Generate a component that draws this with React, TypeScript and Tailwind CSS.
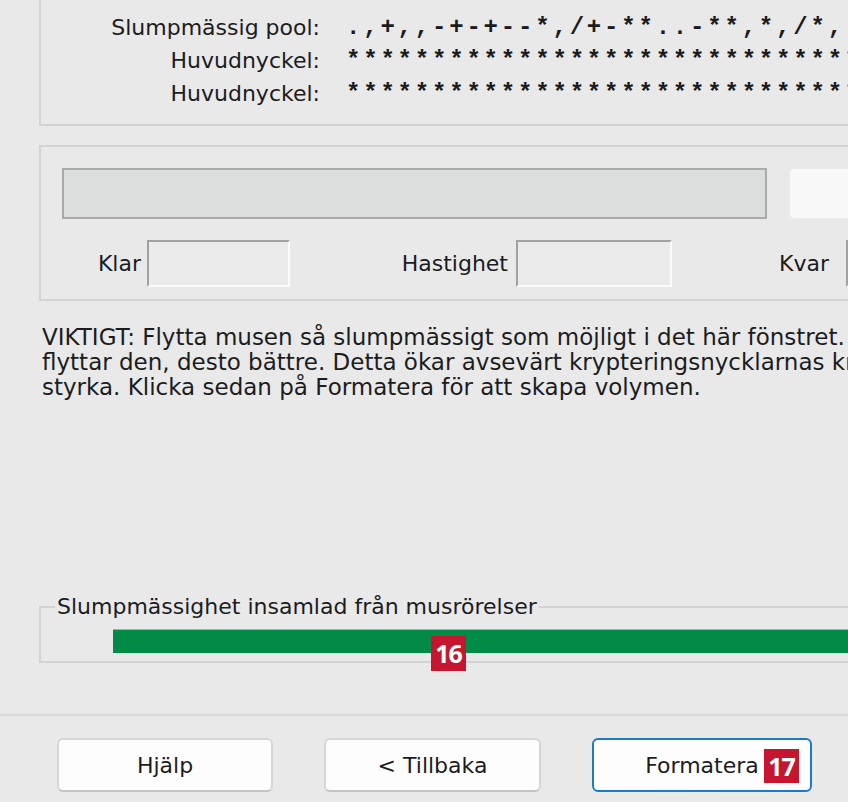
import React from "react";

const ui = { fontFamily: '"DejaVu Sans", Verdana, sans-serif' };
const mono = { fontFamily: '"Liberation Mono", "Courier New", monospace' };
const badge = { fontFamily: '"Open Sans", "Liberation Sans", Arial, sans-serif' };

function Sunken({ w }: { w: string }) {
  return (
    <div
      className={`${w} h-[47px] bg-[#ebebeb] border-2 border-t-[#a2a2a2] border-l-[#a2a2a2] border-b-[#fbfbfb] border-r-[#fbfbfb] shrink-0`}
    />
  );
}

export default function App() {
  const pool = ".,+,,-+-+--*,/+-**..-**,*,/*,-+*.,/-*+,.";
  const stars = "****************************************";
  return (
    <div className="w-[848px] h-[802px] overflow-hidden bg-[#e9e9e9] text-[#1c1c1e]" style={ui}>
      <div className="w-[1200px]">
        {/* Top group box */}
        <div className="ml-[39px] w-[1100px] h-[126px] border-2 border-t-0 border-[#d3d3d3] pt-[11px]">
          <div className="grid grid-cols-[279px_1fr] text-[22px] leading-[33px]">
            <div className="text-right">Slumpmässig pool:</div>
            <div className="pl-[26px] font-bold text-[24px] tracking-[2.8px] whitespace-nowrap" style={mono}>{pool}</div>
            <div className="text-right">Huvudnyckel:</div>
            <div className="pl-[26px] font-bold text-[24px] tracking-[2.8px] whitespace-nowrap" style={mono}>{stars}</div>
            <div className="text-right">Huvudnyckel:</div>
            <div className="pl-[26px] font-bold text-[24px] tracking-[2.8px] whitespace-nowrap" style={mono}>{stars}</div>
          </div>
        </div>

        {/* Middle group box */}
        <div className="mt-[19px] ml-[39px] w-[1100px] h-[156px] border-2 border-[#d3d3d3] pt-[21px] pl-[21px]">
          <div className="flex gap-[22px]">
            <div className="w-[705px] h-[51px] bg-[#dcdddd] border-2 border-[#a9abab]" />
            <div className="w-[160px] h-[51px] bg-[#f8f8f8] rounded-[5px] border border-[#ececec]" />
          </div>
          <div className="flex items-center mt-[21px] text-[22px]">
            <div className="w-[79px] text-right">Klar</div>
            <div className="w-[6px]" />
            <Sunken w="w-[143px]" />
            <div className="w-[218px] text-right">Hastighet</div>
            <div className="w-[8px]" />
            <Sunken w="w-[156px]" />
            <div className="w-[157px] text-right">Kvar</div>
            <div className="w-[17px]" />
            <Sunken w="w-[150px]" />
          </div>
        </div>

        {/* Paragraph */}
        <div className="mt-[24px] ml-[42px] text-[23px] leading-[25px] whitespace-nowrap">
          VIKTIGT: Flytta musen så slumpmässigt som möjligt i det här fönstret. Ju längre du
          <br />
          flyttar den, desto bättre. Detta ökar avsevärt krypteringsnycklarnas kryptografiska
          <br />
          styrka. Klicka sedan på Formatera för att skapa volymen.
        </div>

        {/* Bottom group box */}
        <fieldset className="relative mt-[194px] ml-[39px] w-[1100px] border-2 border-[#d3d3d3] pb-[8px]">
          <legend className="ml-[14px] px-[2px] text-[22px] leading-[26px]">
            Slumpmässighet insamlad från musrörelser
          </legend>
          <div className="ml-[72px] mt-[9px] h-[24px] bg-[#028a47] border-t border-[#9fb3a8]" />
          <div
            className="absolute left-[390px] top-[16px] w-[35px] h-[35px] bg-[#c5152f] text-white font-bold text-[25px] leading-[35px] text-center tracking-[-1px]"
            style={badge}
          >
            16
          </div>
        </fieldset>

        {/* Separator */}
        <div className="mt-[51px] h-[2px] bg-[#d8d8d8]" />

        {/* Buttons */}
        <div className="flex pl-[57px] gap-[51px] mt-[22px] text-[22px]">
          <div className="w-[216px] h-[54px] rounded-[6px] bg-[#fdfdfd] border-2 border-[#d6d6d6] border-b-[#c4c4c4] flex items-center justify-center">
            Hjälp
          </div>
          <div className="w-[217px] h-[54px] rounded-[6px] bg-[#fdfdfd] border-2 border-[#d6d6d6] border-b-[#c4c4c4] flex items-center justify-center">
            &lt; Tillbaka
          </div>
          <div className="relative w-[220px] h-[54px] rounded-[6px] bg-[#fdfdfd] border-2 border-[#1a7cc7] flex items-center justify-center">
            Formatera
            <div
              className="absolute left-[170px] top-[9px] w-[35px] h-[34px] bg-[#c5152f] text-white font-bold text-[25px] leading-[34px] text-center tracking-[-1px]"
              style={badge}
            >
              17
            </div>
          </div>
        </div>
      </div>
    </div>
  );
}
